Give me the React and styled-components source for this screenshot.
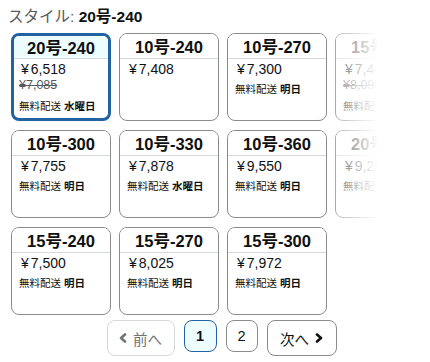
import React from 'react';
import styled, { createGlobalStyle, css } from 'styled-components';

const GlobalStyle = createGlobalStyle`
  html, body {
    margin: 0;
    padding: 0;
    background: #fff;
  }
  body {
    font-family: "Liberation Sans", "Noto Sans CJK JP", sans-serif;
    color: #0f1111;
  }
`;

const Page = styled.div`
  width: 430px;
  height: 362px;
  overflow: hidden;
  padding: 6px 0 0 8px;
  box-sizing: border-box;
`;

const Label = styled.div`
  font-size: 15.5px;
  line-height: 22px;
  height: 27px;
  color: #565959;
`;

const LabelValue = styled.span`
  color: #0f1111;
  font-weight: 700;
`;

const Scroller = styled.div`
  position: relative;
  padding-left: 3px;
  width: 424px;
`;

const Grid = styled.div`
  display: grid;
  grid-template-columns: repeat(4, 100px);
  grid-auto-rows: 88px;
  column-gap: 8px;
  row-gap: 9px;
`;

const Fade = styled.div`
  position: absolute;
  top: 0;
  bottom: 0;
  left: 320px;
  right: -20px;
  background: linear-gradient(to right, rgba(255, 255, 255, 0) 0px, rgba(255, 255, 255, 0.5) 14px, #fff 50px);
  pointer-events: none;
`;

const Card = styled.div`
  box-sizing: border-box;
  border: 1px solid #888c8c;
  border-radius: 8px;
  overflow: hidden;
  display: flex;
  flex-direction: column;
  background: #fff;

  ${props =>
    props.selected &&
    css`
      border: 3px solid #2162a1;
    `}
`;

const CardHeader = styled.div`
  height: ${props => (props.selected ? 22 : 24)}px;
  flex: none;
  display: flex;
  align-items: center;
  justify-content: center;
  font-size: 16.5px;
  font-weight: 700;
  border-bottom: 1px solid #d5d9d9;
  background: ${props => (props.selected ? '#edfdff' : '#fff')};
`;

const CardBody = styled.div`
  padding: 1px 0 0 ${props => (props.selected ? 7 : 9)}px;
  display: flex;
  flex-direction: column;
`;

const Price = styled.div`
  font-size: 14px;
  line-height: 18px;
`;

const Yen = styled.span`
  margin-right: 2px;
`;

const ListPrice = styled.div`
  font-size: 12.5px;
  line-height: 14px;
  color: #565959;
  text-decoration: line-through;
  margin-left: -2px;
  margin-bottom: 3px;
`;

const Delivery = styled.div`
  margin-top: 3px;
  margin-left: -2px;
  font-size: 10.5px;
  line-height: 16px;
  white-space: nowrap;
`;

const DeliveryDay = styled.span`
  font-weight: 700;
`;

const Pager = styled.div`
  display: flex;
  align-items: flex-start;
  justify-content: center;
  gap: 9px;
  width: 427px;
  margin-top: 5px;
`;

const PageButton = styled.div`
  box-sizing: border-box;
  height: ${props => (props.tall ? 36 : 32)}px;
  min-width: ${props => props.width}px;
  padding: 0 10px;
  display: flex;
  align-items: center;
  justify-content: center;
  gap: 6px;
  border-radius: 8px;
  border: 1px solid #888c8c;
  background: #fff;
  font-size: 14.5px;
  color: #0f1111;

  ${props =>
    props.disabled &&
    css`
      border-color: #d5d9d9;
      color: #6f7373;
    `}

  ${props =>
    props.current &&
    css`
      border-color: #2162a1;
      background: #edfdff;
      font-weight: 700;
    `}
`;

const Chevron = ({ dir }) => (
  <svg width="8" height="10" viewBox="0 0 8 10">
    <polyline
      points={dir === 'left' ? '6,1.5 2,5 6,8.5' : '2,1.5 6,5 2,8.5'}
      fill="none"
      stroke="currentColor"
      strokeWidth="2.6"
      strokeLinecap="round"
      strokeLinejoin="round"
    />
  </svg>
);

const swatches = [
  { name: '20号-240', price: '6,518', listPrice: '¥7,085', day: '水曜日', selected: true },
  { name: '10号-240', price: '7,408' },
  { name: '10号-270', price: '7,300', day: '明日' },
  { name: '15号-210', price: '7,448', listPrice: '¥8,095', day: '明日' },
  { name: '10号-300', price: '7,755', day: '明日' },
  { name: '10号-330', price: '7,878', day: '水曜日' },
  { name: '10号-360', price: '9,550', day: '明日' },
  { name: '20号-270', price: '9,250', day: '明日' },
  { name: '15号-240', price: '7,500', day: '明日' },
  { name: '15号-270', price: '8,025', day: '明日' },
  { name: '15号-300', price: '7,972', day: '明日' },
];

const App = () => (
  <Page>
    <GlobalStyle />
    <Label>
      スタイル: <LabelValue>20号-240</LabelValue>
    </Label>

    <Scroller>
      <Grid>
        {swatches.map(item => (
          <Card key={item.name} selected={item.selected}>
            <CardHeader selected={item.selected}>{item.name}</CardHeader>
            <CardBody selected={item.selected}>
              <Price>
                <Yen>¥</Yen>
                {item.price}
              </Price>
              {item.listPrice && <ListPrice>{item.listPrice}</ListPrice>}
              {item.day && (
                <Delivery>
                  無料配送 <DeliveryDay>{item.day}</DeliveryDay>
                </Delivery>
              )}
            </CardBody>
          </Card>
        ))}
      </Grid>
      <Fade />
    </Scroller>

    <Pager>
      <PageButton tall disabled width={68}>
        <Chevron dir="left" />
        前へ
      </PageButton>
      <PageButton current width={33}>1</PageButton>
      <PageButton width={32}>2</PageButton>
      <PageButton tall width={70}>
        次へ
        <Chevron dir="right" />
      </PageButton>
    </Pager>
  </Page>
);

export default App;
